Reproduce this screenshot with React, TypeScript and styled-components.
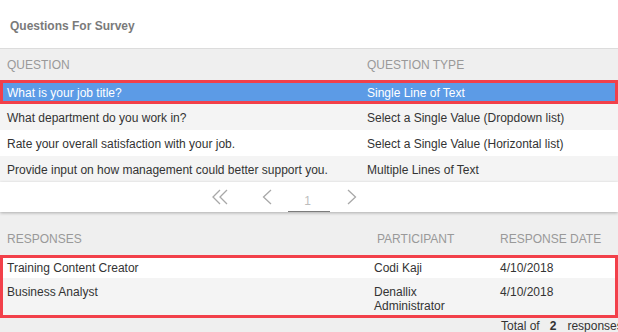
import React from "react";
import styled, { createGlobalStyle } from "styled-components";

const Global = createGlobalStyle`
  html, body { margin: 0; padding: 0; overflow: hidden; }
  body {
    background: #efefef;
    font-family: "Liberation Sans", Arial, sans-serif;
    font-size: 12px;
    color: #333;
  }
  * { box-sizing: border-box; }
`;

const Page = styled.div`
  width: 618px;
  height: 332px;
  display: flex;
  flex-direction: column;
  background: #efefef;
`;

const TitleBar = styled.div`
  height: 49px;
  background: #fff;
  border-bottom: 1px solid #dcdcdc;
  display: flex;
  align-items: center;
  padding: 3px 0 0 10px;
  font-weight: bold;
  font-size: 12px;
  color: #7a7a7a;
`;

const QGrid = styled.div`
  display: grid;
  grid-template-columns: 360px 1fr;
`;

const QHeader = styled(QGrid)`
  height: 31px;
  align-items: center;
  padding: 1px 0 0 7px;
  color: #999;
  text-transform: uppercase;
  line-height: 14px;
`;

type Variant = "selected" | "alt" | "plain";

const QRow = styled(QGrid)<{ $variant: Variant; $h: number }>`
  height: ${(p) => p.$h}px;
  align-items: center;
  padding-left: 7px;
  padding-top: 1px;
  line-height: 14px;
  background: ${(p) =>
    p.$variant === "selected" ? "#5c9be6" : p.$variant === "alt" ? "#f4f4f4" : "#fff"};
  color: ${(p) => (p.$variant === "selected" ? "#fff" : "#333")};
  box-shadow: ${(p) => (p.$variant === "selected" ? "inset 0 0 0 3px #f2404a" : "none")};
  white-space: nowrap;
`;

const Pager = styled.div`
  height: 30px;
  background: #fff;
  display: flex;
  align-items: center;
  padding-left: 211px;
  box-shadow: 0 1px 3px rgba(0, 0, 0, 0.28);
  position: relative;
  z-index: 1;
`;

const PagerIcon = styled.svg<{ $ml: number }>`
  margin-left: ${(p) => p.$ml}px;
  display: block;
  flex: none;
`;

const PageBox = styled.div`
  margin-left: 16px;
  width: 42px;
  height: 22px;
  margin-top: 7px;
  border-bottom: 1.5px solid #7c7c7c;
  color: #bdbdbd;
  display: flex;
  align-items: center;
  justify-content: center;
  font-size: 12px;
  padding: 2px 3px 0 0;
`;

const RGrid = styled.div`
  display: grid;
  grid-template-columns: 367px 126px 1fr;
`;

const RHeader = styled(RGrid)`
  height: 43px;
  align-items: end;
  padding: 0 0 9px 7px;
  color: #999;
  text-transform: uppercase;
  line-height: 14px;
`;

const HeadCell = styled.div<{ $shift?: number }>`
  padding-left: ${(p) => p.$shift ?? 0}px;
`;

const RBody = styled.div`
  border: 3px solid #f2404a;
`;

const RRow = styled(RGrid)<{ $alt?: boolean; $h: number; $pt: number }>`
  height: ${(p) => p.$h}px;
  padding: ${(p) => p.$pt}px 0 0 4px;
  line-height: 14px;
  background: ${(p) => (p.$alt ? "#f4f4f4" : "#fff")};
  align-items: start;
`;

const Footer = styled(RGrid)`
  padding-left: 7px;
  line-height: 12px;
  margin-top: 2px;
  white-space: nowrap;
`;

const Total = styled.div`
  grid-column: 3;
  display: flex;
  gap: 10px;
  margin-left: 1px;
`;

const Count = styled.b`
  margin-right: 1px;
`;

const Chevron = ({ double, dir, ml }: { double?: boolean; dir: "l" | "r"; ml: number }) => {
  const w = double ? 17 : 10;
  const paths =
    dir === "l"
      ? double
        ? ["M9 1 L2 8 L9 15", "M16 1 L9 8 L16 15"]
        : ["M9 1 L1.5 8 L9 15"]
      : ["M1 1 L8.5 8 L1 15"];
  return (
    <PagerIcon $ml={ml} width={w} height={16} viewBox={`0 0 ${w} 16`}>
      {paths.map((d) => (
        <path key={d} d={d} fill="none" stroke="#a8a8a8" strokeWidth={1.3} />
      ))}
    </PagerIcon>
  );
};

const questions: { q: string; t: string; v: Variant; h: number }[] = [
  { q: "What is your job title?", t: "Single Line of Text", v: "selected", h: 24 },
  { q: "What department do you work in?", t: "Select a Single Value (Dropdown list)", v: "alt", h: 26 },
  { q: "Rate your overall satisfaction with your job.", t: "Select a Single Value (Horizontal list)", v: "plain", h: 26 },
  { q: "Provide input on how management could better support you.", t: "Multiple Lines of Text", v: "alt", h: 26 },
];

export default function App() {
  return (
    <Page>
      <Global />
      <TitleBar>Questions For Survey</TitleBar>
      <QHeader>
        <div>Question</div>
        <div>Question Type</div>
      </QHeader>
      {questions.map((r) => (
        <QRow key={r.q} $variant={r.v} $h={r.h}>
          <div>{r.q}</div>
          <div>{r.t}</div>
        </QRow>
      ))}
      <Pager>
        <Chevron double dir="l" ml={0} />
        <Chevron dir="l" ml={34} />
        <PageBox>1</PageBox>
        <Chevron dir="r" ml={17} />
      </Pager>
      <RHeader>
        <div>Responses</div>
        <HeadCell $shift={3}>Participant</HeadCell>
        <div>Response Date</div>
      </RHeader>
      <RBody>
        <RRow $h={20} $pt={3}>
          <div>Training Content Creator</div>
          <div>Codi Kaji</div>
          <div>4/10/2018</div>
        </RRow>
        <RRow $alt $h={37} $pt={7}>
          <div>Business Analyst</div>
          <div>
            Denallix
            <br />
            Administrator
          </div>
          <div>4/10/2018</div>
        </RRow>
      </RBody>
      <Footer>
        <Total>
          <span>Total of</span>
          <Count>2</Count>
          <span>responses</span>
        </Total>
      </Footer>
    </Page>
  );
}
